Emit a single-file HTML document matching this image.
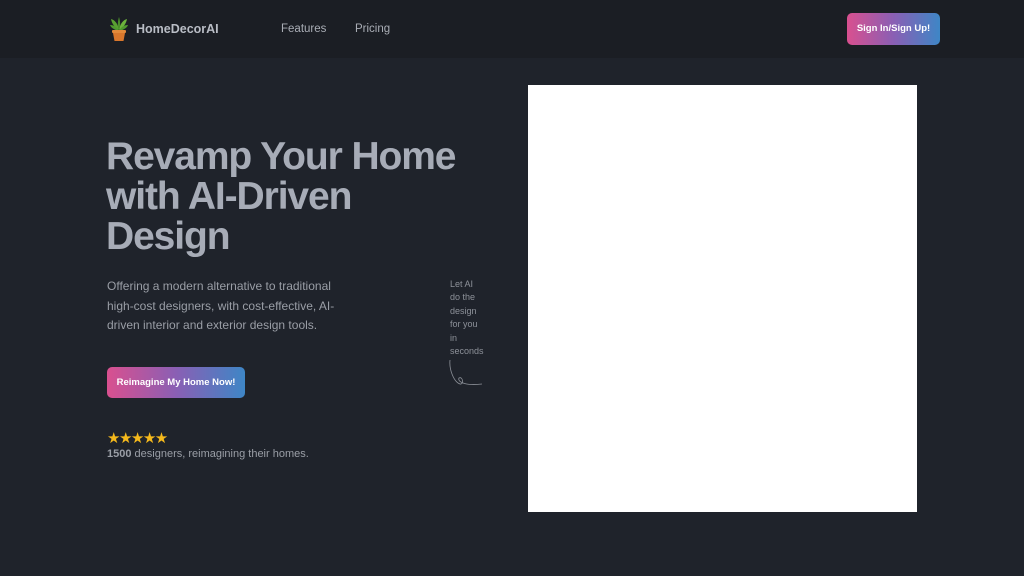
<!DOCTYPE html>
<html><head><meta charset="utf-8"><style>
*{margin:0;padding:0;box-sizing:border-box}
body{width:1024px;height:576px;overflow:hidden;background:#1f232b;font-family:"Liberation Sans",sans-serif;position:relative}
.hdr{position:absolute;left:0;top:0;width:1024px;height:58px;background:#1b1e24}
.logo{position:absolute;left:136px;top:22px;font-size:12.5px;font-weight:bold;color:#b9bdc5}
.nav{position:absolute;top:23px;font-size:11.5px;color:#a9adb5}
.grad{background:linear-gradient(90deg,#d9508f,#8a5fb4,#3e86c6);color:#fff;font-weight:bold;border-radius:5px;position:absolute;font-size:9.5px;line-height:1;display:flex;align-items:center;justify-content:center}
h1{position:absolute;left:106px;top:137px;font-size:39px;line-height:40px;color:#a7acb7;letter-spacing:-1.1px;font-weight:bold}
.p{position:absolute;left:107px;top:277px;font-size:12px;line-height:19.5px;color:#9a9ea6;width:250px}
.side{position:absolute;left:450px;top:278px;font-size:9px;line-height:13.4px;color:#8d9199}
.stars{position:absolute;left:107px;top:429px;color:#f5b91c;font-size:15px;letter-spacing:-1.5px}
.cnt{position:absolute;left:107px;top:448px;font-size:11px;color:#9a9ea6}
.img{position:absolute;left:528px;top:85px;width:389px;height:427px;background:#fff}
</style></head><body>
<div class="hdr"></div>
<svg style="position:absolute;left:108px;top:16px" width="22" height="26" viewBox="0 0 22 26">
<path d="M11 14 C10 8 7 4 3 3 C4 8 7 12 11 14Z" fill="#5aa132"/>
<path d="M11 14 C12 8 15 4 19 3 C18 8 15 12 11 14Z" fill="#6cb33c"/>
<path d="M11 14 C9 10 10 4 11 1 C12 4 13 10 11 14Z" fill="#4a8f2a"/>
<path d="M11 15 C7 14 3 12 2 9 C6 9 9 11 11 15Z" fill="#4f9a2e"/>
<path d="M11 15 C15 14 19 12 20 9 C16 9 13 11 11 15Z" fill="#4f9a2e"/>
<rect x="4" y="14" width="14" height="3" rx="1" fill="#e38a3a"/>
<path d="M5 17 H17 L15.5 25 H6.5Z" fill="#d9772c"/>
</svg>
<div class="logo">HomeDecorAI</div>
<div class="nav" style="left:281px">Features</div>
<div class="nav" style="left:355px">Pricing</div>
<div class="grad" style="left:847px;top:13px;width:93px;height:32px">Sign In/Sign Up!</div>
<h1>Revamp Your Home<br>with AI-Driven<br>Design</h1>
<div class="p">Offering a modern alternative to traditional high-cost designers, with cost-effective, AI-driven interior and exterior design tools.</div>
<div class="side">Let AI<br>do the<br>design<br>for you<br>in<br>seconds</div>
<svg style="position:absolute;left:446px;top:358px" width="40" height="32" viewBox="0 0 40 32"><path d="M4 2 C3 12 8 24 14 26 C18 27 17 18 13 20 C11 24 20 28 36 26" fill="none" stroke="#8d9199" stroke-width="0.8"/></svg>
<div class="grad" style="left:107px;top:367px;width:138px;height:31px">Reimagine My Home Now!</div>
<div class="stars">★★★★★</div>
<div class="cnt"><b>1500</b> designers, reimagining their homes.</div>
<div class="img"></div>
</body></html>
